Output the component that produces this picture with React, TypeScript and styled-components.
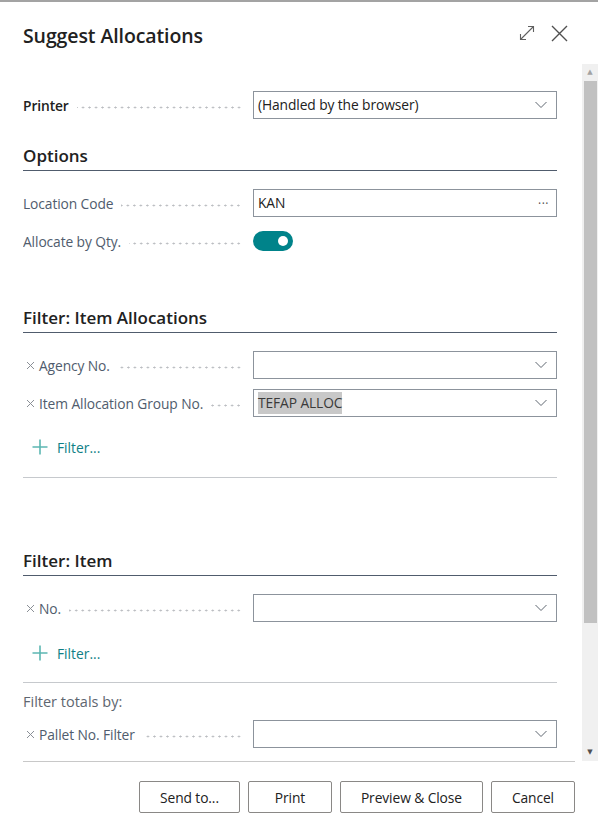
import React from "react";
import styled, { createGlobalStyle } from "styled-components";

const GlobalStyle = createGlobalStyle`
  html, body { margin: 0; padding: 0; background: #fff; }
  body { font-family: "Open Sans", "Noto Sans", sans-serif; color: #212121; }
`;

type Field = {
	label: string;
	kind: "select" | "lookup" | "toggle";
	value?: string;
	removable?: boolean;
	highlight?: boolean;
	strong?: boolean;
};

const ChevronDown = () => (
	<svg width="12" height="8" viewBox="0 0 12 8">
		<path d="M0.5 1 L6 6.5 L11.5 1" fill="none" stroke="#5f6670" strokeWidth="1" />
	</svg>
);

const RemoveX = () => (
	<svg width="9" height="9" viewBox="0 0 9 9">
		<path d="M1 1 L8 8 M8 1 L1 8" stroke="#8a8f96" strokeWidth="1" />
	</svg>
);

const PlusIcon = () => (
	<svg width="16" height="16" viewBox="0 0 16 16">
		<path d="M8 0.5 V15.5 M0.5 8 H15.5" stroke="#5cb7b2" strokeWidth="1.6" />
	</svg>
);

const ExpandIcon = () => (
	<svg width="16" height="16" viewBox="0 0 16 16">
		<path d="M1.5 14.5 L14.5 1.5 M9 1.5 H14.5 V7 M1.5 9 V14.5 H7" fill="none" stroke="#606060" strokeWidth="1.1" />
	</svg>
);

const CloseIcon = () => (
	<svg width="17" height="17" viewBox="0 0 17 17">
		<path d="M1 1 L16 16 M16 1 L1 16" stroke="#505050" strokeWidth="1.4" />
	</svg>
);

const FieldRow = ({ field }: { field: Field }) => (
	<Row>
		<LabelCell>
			{field.removable && (
				<RemoveSlot>
					<RemoveX />
				</RemoveSlot>
			)}
			<Label strong={field.strong}>{field.label}</Label>
			<Leader />
		</LabelCell>
		{field.kind === "toggle" ? (
			<ToggleCell>
				<Toggle>
					<Knob />
				</Toggle>
			</ToggleCell>
		) : (
			<Input>
				<InputText highlight={field.highlight}>{field.value}</InputText>
				{field.kind === "select" ? (
					<ChevronDown />
				) : (
					<Ellipsis>···</Ellipsis>
				)}
			</Input>
		)}
	</Row>
);

const AddFilter = ({ top }: { top: number }) => (
	<FilterLink top={top}>
		<PlusIcon />
		<FilterText>Filter...</FilterText>
	</FilterLink>
);

const App = () => {
	return (
		<Dialog>
			<GlobalStyle />
			<Header>
				<Title>Suggest Allocations</Title>
				<HeaderActions>
					<IconButton>
						<ExpandIcon />
					</IconButton>
					<IconButton>
						<CloseIcon />
					</IconButton>
				</HeaderActions>
			</Header>
			<Body>
				<Content>
					<FieldRow field={{ label: "Printer", kind: "select", value: "(Handled by the browser)", strong: true }} />

					<SectionTitle top={25}>Options</SectionTitle>
					<Group>
						<FieldRow field={{ label: "Location Code", kind: "lookup", value: "KAN" }} />
						<FieldRow field={{ label: "Allocate by Qty.", kind: "toggle" }} />
					</Group>

					<SectionTitle top={51}>Filter: Item Allocations</SectionTitle>
					<Group>
						<FieldRow field={{ label: "Agency No.", kind: "select", removable: true }} />
						<FieldRow field={{ label: "Item Allocation Group No.", kind: "select", value: "TEFAP ALLOC", removable: true, highlight: true }} />
					</Group>
					<AddFilter top={16} />
					<Divider top={16} />

					<SectionTitle top={71}>Filter: Item</SectionTitle>
					<Group>
						<FieldRow field={{ label: "No.", kind: "select", removable: true }} />
					</Group>
					<AddFilter top={17} />
					<Divider top={15} />

					<SubHeading>Filter totals by:</SubHeading>
					<Group top={8}>
						<FieldRow field={{ label: "Pallet No. Filter", kind: "select", removable: true }} />
					</Group>
					<Divider top={16} />
				</Content>
				<ScrollBar>
					<ScrollArrow>▲</ScrollArrow>
					<ScrollThumb />
					<ScrollArrow dark>▼</ScrollArrow>
				</ScrollBar>
			</Body>
			<Footer>
				<Button>Send to...</Button>
				<Button>Print</Button>
				<Button>Preview &amp; Close</Button>
				<Button>Cancel</Button>
			</Footer>
		</Dialog>
	);
};

// STYLED COMPONENTS //
const Dialog = styled.div({
	width: 598,
	height: 823,
	boxSizing: "border-box",
	borderTop: "2px solid #a3a3a3",
	background: "#fff",
	display: "flex",
	flexDirection: "column",
	overflow: "hidden",
});
const Header = styled.header({
	height: 62,
	display: "flex",
	alignItems: "center",
	justifyContent: "space-between",
	padding: "4px 30px 0 23px",
	boxSizing: "border-box",
});
const Title = styled.h1({
	margin: 0,
	fontSize: 19.5,
	fontWeight: 600,
	color: "#212121",
	letterSpacing: -0.1,
});
const HeaderActions = styled.div({
	display: "flex",
	alignItems: "center",
	gap: 16,
	marginTop: -4,
});
const IconButton = styled.span({
	display: "flex",
	alignItems: "center",
	justifyContent: "center",
});
const Body = styled.div({
	height: 697,
	display: "flex",
	overflow: "hidden",
});
const Content = styled.div({
	flex: 1,
	padding: "27px 25px 0 23px",
	display: "flex",
	flexDirection: "column",
	overflow: "hidden",
});
const Group = styled.div<{ top?: number }>((props) => ({
	display: "flex",
	flexDirection: "column",
	gap: 10,
	marginTop: props.top ?? 18,
	flexShrink: 0,
}));
const Row = styled.div({
	display: "flex",
	alignItems: "center",
	height: 28,
	flexShrink: 0,
});
const LabelCell = styled.div({
	width: 219,
	marginRight: 11,
	display: "flex",
	alignItems: "center",
	overflow: "hidden",
});
const RemoveSlot = styled.span({
	display: "flex",
	alignItems: "center",
	margin: "0 4px 0 3px",
});
const Label = styled.span<{ strong?: boolean }>((props) => ({
	fontSize: 13.8,
	letterSpacing: -0.1,
	whiteSpace: "nowrap",
	color: props.strong ? "#212121" : "#505c6d",
	fontWeight: props.strong ? 600 : 400,
}));
const Leader = styled.span({
	flex: 1,
	height: 3,
	marginLeft: 8,
	marginTop: 4,
	backgroundImage: "radial-gradient(circle, #b9bcc0 0.9px, transparent 1.1px)",
	backgroundSize: "6.5px 3px",
	backgroundRepeat: "repeat-x",
	backgroundPosition: "right center",
});
const Input = styled.div({
	flex: 1,
	height: 28,
	boxSizing: "border-box",
	border: "1px solid #8c939c",
	display: "flex",
	alignItems: "center",
	justifyContent: "space-between",
	padding: "0 9px 0 4px",
});
const InputText = styled.span<{ highlight?: boolean }>((props) => ({
	fontSize: 13.8,
	letterSpacing: -0.1,
	color: props.highlight ? "#3a3a3a" : "#212121",
	background: props.highlight ? "#c8c8c8" : "transparent",
	padding: "1px 0",
	lineHeight: "20px",
}));
const Ellipsis = styled.span({
	fontSize: 12,
	color: "#505050",
	letterSpacing: 0.5,
	marginRight: -2,
});
const ToggleCell = styled.div({
	flex: 1,
	display: "flex",
	alignItems: "center",
});
const Toggle = styled.div({
	width: 40,
	height: 20,
	borderRadius: 10,
	background: "#00838a",
	display: "flex",
	alignItems: "center",
	justifyContent: "flex-end",
	padding: "0 5px",
	boxSizing: "border-box",
});
const Knob = styled.div({
	width: 10,
	height: 10,
	borderRadius: "50%",
	background: "#fff",
});
const SectionTitle = styled.h2<{ top: number }>((props) => ({
	margin: 0,
	marginTop: props.top,
	fontSize: 17,
	fontWeight: 600,
	lineHeight: "24px",
	paddingBottom: 2,
	borderBottom: "1px solid #505c6d",
	color: "#212121",
	flexShrink: 0,
}));
const FilterLink = styled.div<{ top: number }>((props) => ({
	display: "flex",
	alignItems: "center",
	height: 28,
	marginTop: props.top,
	paddingLeft: 9,
	gap: 9,
	flexShrink: 0,
}));
const FilterText = styled.span({
	fontSize: 13.8,
	color: "#0f7f86",
});
const Divider = styled.div<{ top: number }>((props) => ({
	height: 1,
	background: "#c6c9cd",
	marginTop: props.top,
	flexShrink: 0,
}));
const SubHeading = styled.div({
	fontSize: 14.5,
	color: "#5e6670",
	lineHeight: "20px",
	marginTop: 9,
	flexShrink: 0,
});
const ScrollBar = styled.div({
	width: 16,
	background: "#f0f0f0",
	display: "flex",
	flexDirection: "column",
	alignItems: "center",
});
const ScrollArrow = styled.div<{ dark?: boolean }>((props) => ({
	height: 17,
	fontSize: 7,
	lineHeight: "17px",
	color: props.dark ? "#505050" : "#a3a3a3",
	textAlign: "center",
	fontFamily: '"DejaVu Sans", sans-serif',
	marginTop: props.dark ? "auto" : 0,
}));
const ScrollThumb = styled.div({
	width: 13,
	height: 542,
	background: "#c1c1c1",
});
const Footer = styled.footer({
	flex: 1,
	margin: "0 23px",
	borderTop: "1px solid #c8c8c8",
	display: "flex",
	justifyContent: "flex-end",
	alignItems: "flex-start",
	paddingTop: 19,
	gap: 8,
});
const Button = styled.button({
	height: 32,
	padding: "0 20px",
	minWidth: 84,
	boxSizing: "border-box",
	border: "1px solid #8a8886",
	borderRadius: 2,
	background: "#fff",
	fontFamily: '"Open Sans", "Noto Sans", sans-serif',
	fontSize: 13.8,
	letterSpacing: -0.1,
	color: "#212121",
});

export default App;
